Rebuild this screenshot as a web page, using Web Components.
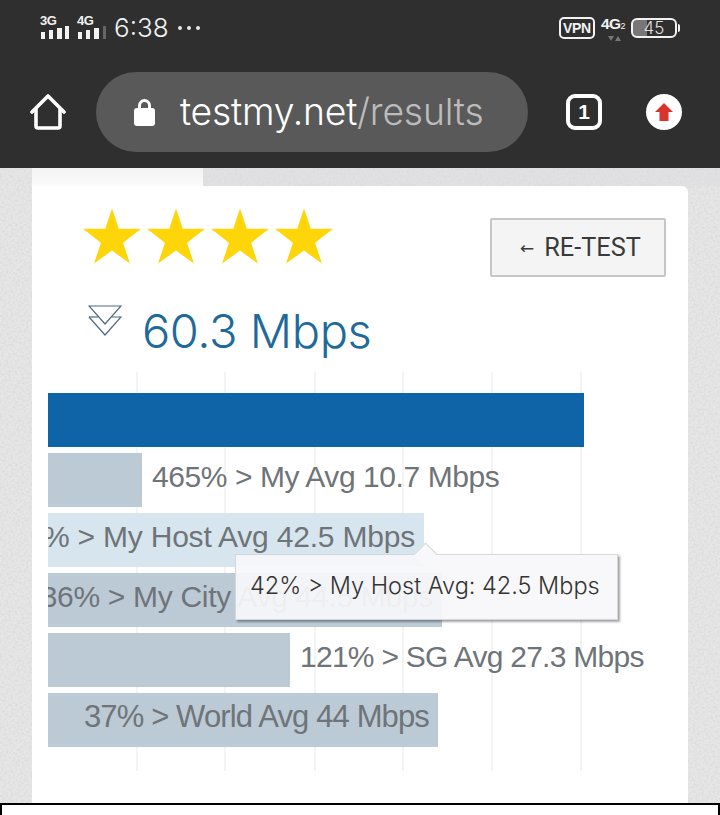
<!DOCTYPE html>
<html lang="en">
<head>
<meta charset="utf-8">
<title>testmy.net results</title>
<style>
  html, body { margin: 0; height: 815px; overflow: hidden; }
  body {
    background-color: #e6e6e6;
    background-image: url("data:image/svg+xml,%3Csvg xmlns='http://www.w3.org/2000/svg' width='240' height='240'%3E%3Cfilter id='n'%3E%3CfeTurbulence type='fractalNoise' baseFrequency='0.45' numOctaves='2'/%3E%3CfeColorMatrix values='0 0 0 0 0.55 0 0 0 0 0.55 0 0 0 0 0.55 0.7 0 0 0 -0.26'/%3E%3C/filter%3E%3Crect width='240' height='240' filter='url(%23n)'/%3E%3C/svg%3E");
    font-family: "Liberation Sans", Arial, sans-serif;
    display: flex;
    flex-direction: column;
  }
</style>
</head>
<body>
  <status-bar></status-bar>
  <browser-bar host-name="testmy.net" path="/results" tabs="1"></browser-bar>
  <page-tab></page-tab>
  <result-card>
    <star-rating slot="rating" count="4"></star-rating>
    <retest-button slot="action">RE-TEST</retest-button>
    <speed-readout slot="speed">60.3 Mbps</speed-readout>
    <bar-chart slot="chart">
      <chart-bar size="536" tone="primary"></chart-bar>
      <chart-bar size="94" spacing="-0.43" outside>465% &gt; My Avg 10.7 Mbps</chart-bar>
      <chart-bar size="376" spacing="-0.2" tone="hover">42% &gt; My Host Avg 42.5 Mbps</chart-bar>
      <chart-bar size="394" spacing="-0.3">36% &gt; My City Avg 44.5 Mbps</chart-bar>
      <chart-bar size="242" spacing="-0.73" outside>121% &gt; SG Avg 27.3 Mbps</chart-bar>
      <chart-bar size="390" spacing="-0.87" text-size="31">37% &gt; World Avg 44 Mbps</chart-bar>
      <chart-tooltip>42% &gt; My Host Avg: 42.5 Mbps</chart-tooltip>
    </bar-chart>
  </result-card>
  <footer-box></footer-box>

<script>
/**
 * Phone status bar with signal, clock, VPN and battery.
 */
customElements.define('status-bar', class extends HTMLElement {
  constructor () {
    super()
    this.attachShadow({ mode: 'open' }).innerHTML = `
      <style>
        :host {
          display: flex;
          align-items: center;
          height: 56px;
          padding: 0 40px;
          background: #2f2f2f;
          color: #f2f2f2;
          font-family: "Liberation Sans", Arial, sans-serif;
        }
        .signal { display: flex; flex-direction: column; align-items: flex-start; width: 37px; margin-top: -3px; }
        .signal b { font-size: 13px; line-height: 11px; letter-spacing: -0.5px; }
        svg { display: block; }
        .clock { font: 300 26px/56px Inter, sans-serif; }
        .dots { margin-left: 9px; display: flex; gap: 5px; }
        .dots i { width: 4px; height: 4px; border-radius: 50%; background: #e8e8e8; }
        .right { margin-left: auto; display: flex; align-items: center; }
        .vpn {
          box-sizing: border-box; width: 36px; height: 22px;
          border: 2px solid #f2f2f2; border-radius: 5px;
          font-size: 14px; font-weight: bold; line-height: 18px; text-align: center; letter-spacing: -0.3px;
        }
        .net { width: 30px; margin-left: 6px; display: flex; flex-direction: column; align-items: flex-start; }
        .net b { font-size: 15.5px; line-height: 15px; letter-spacing: -0.6px; }
        .net sub { font-size: 9px; font-weight: normal; vertical-align: baseline; }
        .net svg { margin: 2px 0 0 7px; }
        .battery {
          box-sizing: border-box; width: 46px; height: 20px;
          border: 2px solid #f2f2f2; border-radius: 6px;
          font: 300 17px/16px Inter, sans-serif; text-align: center; color: #e0e0e0;
          background: linear-gradient(90deg, #777 0 14px, transparent 14px);
        }
        .nub { width: 2px; height: 8px; background: #f2f2f2; margin-left: 1px; border-radius: 0 2px 2px 0; }
      </style>
      <div class="signal"><b>3G</b>
        <svg width="30" height="13" fill="#f2f2f2"><rect x="1" y="6" width="4" height="7"/><rect x="9" y="4" width="4" height="9"/><rect x="17" y="2" width="5" height="11"/><rect x="25" width="4" height="13"/></svg>
      </div>
      <div class="signal"><b>4G</b>
        <svg width="30" height="13" fill="#f2f2f2"><rect x="1" y="6" width="4" height="7"/><rect x="9" y="4" width="4" height="9"/><rect x="17" y="2" width="5" height="11"/><rect x="26" width="3" height="13" fill="#666"/></svg>
      </div>
      <div class="clock">6:38</div>
      <div class="dots"><i></i><i></i><i></i></div>
      <div class="right">
        <div class="vpn">VPN</div>
        <div class="net"><b>4G<sub>2</sub></b>
          <svg width="13" height="5" fill="#777"><path d="M0 0H6L3 5ZM7 5H13L10 0Z"/></svg>
        </div>
        <div class="battery">45</div>
        <div class="nub"></div>
      </div>`
  }
})

/**
 * Mobile browser toolbar: home, address pill, tab count, update button.
 */
customElements.define('browser-bar', class extends HTMLElement {
  constructor () {
    super()
    this.attachShadow({ mode: 'open' })
  }

  connectedCallback () {
    this.shadowRoot.innerHTML = `
      <style>
        :host {
          display: flex;
          align-items: center;
          height: 112px;
          box-sizing: border-box;
          padding: 0 38px 0 30px;
          background: #2f2f2f;
        }
        svg { display: block; flex: none; }
        .pill {
          box-sizing: border-box;
          display: flex; align-items: center;
          width: 432px; height: 80px;
          margin-left: 30px; padding-left: 38px;
          border-radius: 40px;
          background: #595959;
          font: 300 37.3px/84px Inter, sans-serif;
          color: #fff;
        }
        .pill span { margin-left: 25px; letter-spacing: -0.2px; }
        .pill em { font-style: normal; color: #bcbcbc; }
        .tabs {
          box-sizing: border-box; flex: none;
          width: 36px; height: 36px; margin-left: 38px;
          border: 4px solid #fff; border-radius: 9px;
          color: #fff; font: bold 21px/28px "Liberation Sans", Arial, sans-serif; text-align: center;
        }
        .update { margin-left: auto; }
      </style>
      <svg width="36" height="36" viewBox="0 0 36 36" fill="none" stroke="#fff" stroke-width="3.600" stroke-linejoin="round" stroke-linecap="round">
        <path d="M2 18 18 2l16 16"/><path d="M6 15v17a2 2 0 0 0 2 2h20a2 2 0 0 0 2-2V15"/>
      </svg>
      <div class="pill">
        <svg width="21" height="27" viewBox="0 0 21 27"><path d="M5.500 11V6.500a5 5 0 0 1 10 0V11" fill="none" stroke="#fff" stroke-width="3"/><rect y="9" width="21" height="18" rx="3" fill="#fff"/></svg>
        <span>${this.getAttribute('host-name')}<em>${this.getAttribute('path')}</em></span>
      </div>
      <div class="tabs">${this.getAttribute('tabs')}</div>
      <svg class="update" width="36" height="36" viewBox="0 0 36 36">
        <circle cx="18" cy="18" r="18" fill="#fff"/>
        <path d="M18 9 27 18H22.500V27H13.500V18H9Z" fill="#d9342b"/>
      </svg>`
  }
})

/**
 * The strip above the card, with the pale tab on its left.
 */
customElements.define('page-tab', class extends HTMLElement {
  constructor () {
    super()
    this.attachShadow({ mode: 'open' }).innerHTML = `
      <style>
        :host { display: block; height: 18px; padding-left: 32px; background: linear-gradient(rgba(220, 220, 226, 0.5), rgba(220, 220, 226, 0.5)) 203px 0 / 100% 100% no-repeat; }
        div { width: 171px; height: 100%; background: linear-gradient(#f3f3f3, #fbfbfb); }
      </style>
      <div></div>`
  }
})

/**
 * White card holding the rating, the speed and the chart.
 */
customElements.define('result-card', class extends HTMLElement {
  constructor () {
    super()
    this.attachShadow({ mode: 'open' }).innerHTML = `
      <style>
        :host {
          display: block;
          box-sizing: border-box;
          width: 656px; height: 617px;
          margin-left: 32px; padding: 0 16px;
          background: #fff;
          border-radius: 0 6px 0 0;
        }
        .top { display: flex; justify-content: space-between; height: 100px; }
        .speed { height: 86px; }
      </style>
      <div class="top"><slot name="rating"></slot><slot name="action"></slot></div>
      <div class="speed"><slot name="speed"></slot></div>
      <slot name="chart"></slot>`
  }
})

/**
 * A row of gold stars.
 */
customElements.define('star-rating', class extends HTMLElement {
  constructor () {
    super()
    this.attachShadow({ mode: 'open' })
  }

  connectedCallback () {
    const star = `<svg width="58" height="56" viewBox="0 0 60 57"><polygon fill="#fdd508" points="30,0 37,21 60,21 41.500,35.500 48.500,57 30,43.500 11.500,57 18.500,35.500 0,21 23,21"/></svg>`
    this.shadowRoot.innerHTML = `
      <style>
        :host { display: flex; gap: 6px; padding: 22px 0 0 35px; height: 56px; }
        svg { display: block; }
      </style>
      ${star.repeat(Number(this.getAttribute('count')))}`
  }
})

/**
 * The grey button at the top right of the card.
 */
customElements.define('retest-button', class extends HTMLElement {
  constructor () {
    super()
    this.attachShadow({ mode: 'open' }).innerHTML = `
      <style>
        :host {
          display: flex; align-items: center; gap: 10px;
          box-sizing: border-box;
          width: 176px; height: 59px;
          margin: 32px 6px 0 0;
          padding-left: 28px;
          background: #f4f4f4;
          border: 2px solid #c6c6c6;
          border-radius: 2px;
          color: #3a3a3a;
          font: 400 25.300px Roboto, sans-serif;
        }
        i { font: 17px "DejaVu Sans", sans-serif; }
      </style>
      <i>←</i><slot></slot>`
  }
})

/**
 * The measured speed with its download marker.
 */
customElements.define('speed-readout', class extends HTMLElement {
  constructor () {
    super()
    this.attachShadow({ mode: 'open' }).innerHTML = `
      <style>
        :host {
          display: flex; align-items: flex-start;
          padding-left: 40px;
          color: #1e6a9b;
          font: 300 47px/60px Inter, sans-serif;
        }
        svg { display: block; margin: 19px 20px 0 0; flex: none; }
        span { letter-spacing: -0.4px; margin-top: 15px; }
      </style>
      <svg width="34" height="31" viewBox="0 0 34 31" fill="none" stroke="#4d6a80" stroke-width="1.200">
        <path d="M1 1H33L17 19Z"/><path d="M1 12 17 30 33 12H24"/><path d="M1 12H10"/>
      </svg>
      <span><slot></slot></span>`
  }
})

/**
 * Horizontal bar chart with its faint vertical grid.
 */
customElements.define('bar-chart', class extends HTMLElement {
  constructor () {
    super()
    const lines = [88, 176, 266, 354, 443, 532]
    const images = lines.map(() => 'linear-gradient(#f3f3f3, #f3f3f3)').join(',')
    const positions = lines.map(x => `${x}px 0`).join(',')
    this.attachShadow({ mode: 'open' }).innerHTML = `
      <style>
        :host {
          display: flex; flex-direction: column; gap: 6px;
          position: relative;
          height: 399px;
          box-sizing: border-box;
          padding-top: 21px;
          background-image: ${images};
          background-position: ${positions};
          background-size: 2px 100%;
          background-repeat: no-repeat;
        }
      </style>
      <slot></slot>`
  }
})

/**
 * One bar; the label sits inside it, or beside it with the outside attribute.
 */
customElements.define('chart-bar', class extends HTMLElement {
  constructor () {
    super()
    this.attachShadow({ mode: 'open' })
  }

  connectedCallback () {
    const tones = { primary: '#0f64a8', hover: '#d7e5ee' }
    const fill = tones[this.getAttribute('tone')] || '#bccad6'
    const outside = this.hasAttribute('outside')
    const spacing = this.getAttribute('spacing') || '0'
    const size = this.getAttribute('text-size') || '30'
    this.shadowRoot.innerHTML = `
      <style>
        :host {
          display: flex; align-items: flex-start;
          height: 54px;
          color: #6f7479;
          font: ${size}px/48px "Liberation Sans", Arial, sans-serif;
          letter-spacing: ${spacing}px;
          white-space: nowrap;
        }
        .bar {
          flex: none;
          display: flex; justify-content: flex-end;
          box-sizing: border-box;
          width: ${this.getAttribute('size')}px; height: 54px;
          padding-right: 9px;
          overflow: hidden;
          background: ${fill};
        }
        .bar span { flex: none; }
        .beside { margin-left: 10px; }
      </style>
      ${outside
        ? `<div class="bar"></div><div class="beside"><slot></slot></div>`
        : `<div class="bar"><span><slot></slot></span></div>`}`
  }
})

/**
 * Tooltip lying over the chart, with its arrow pointing at the hovered bar.
 */
customElements.define('chart-tooltip', class extends HTMLElement {
  constructor () {
    super()
    this.attachShadow({ mode: 'open' }).innerHTML = `
      <style>
        :host {
          position: absolute;
          left: 187px; top: 182px;
          box-sizing: border-box;
          width: 383px; height: 66px;
          padding-left: 14px;
          background: rgba(248, 248, 250, 0.93);
          border: 1px solid #d4d7da;
          box-shadow: 2px 2px 2px rgba(0, 0, 0, 0.35);
          color: #333;
          font: 300 23.500px/62px Inter, sans-serif;
          white-space: nowrap;
        }
        :host::before {
          content: '';
          position: absolute;
          left: 181px; top: -9px;
          width: 16px; height: 16px;
          background: #f8f8fa;
          border-top: 1px solid #d4d7da;
          border-left: 1px solid #d4d7da;
          transform: rotate(45deg);
        }
      </style>
      <slot></slot>`
  }
})

/**
 * Black outlined box cut off by the bottom of the screen.
 */
customElements.define('footer-box', class extends HTMLElement {
  constructor () {
    super()
    this.attachShadow({ mode: 'open' }).innerHTML = `
      <style>
        :host {
          display: block; box-sizing: border-box;
          height: 12px;
          background: #fff;
          border: 2px solid #000;
          border-bottom: 0;
        }
      </style>`
  }
})
</script>
</body>
</html>
